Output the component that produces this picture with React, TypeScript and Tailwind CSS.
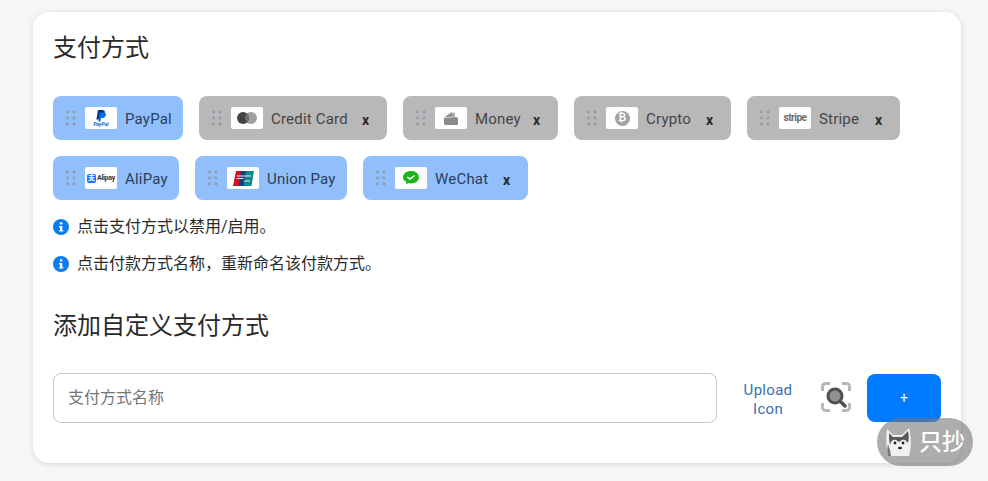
import { ReactNode } from "react";

const font = "font-['Roboto','Noto_Sans_CJK_SC',sans-serif]";

const Grip = () => (
  <svg width="10" height="16" viewBox="0 0 10 16" className="shrink-0 fill-[#8f9aa8]">
    <circle cx="1.5" cy="2" r="1.4" />
    <circle cx="8" cy="2" r="1.4" />
    <circle cx="1.5" cy="8" r="1.4" />
    <circle cx="8" cy="8" r="1.4" />
    <circle cx="1.5" cy="14" r="1.4" />
    <circle cx="8" cy="14" r="1.4" />
  </svg>
);

const PayPalLogo = () => (
  <div className="flex flex-col items-center">
    <svg width="12" height="12" viewBox="0 0 12 12">
      <path d="M3 0h4.200c2 0 3 1.100 2.700 2.800-.4 2.200-1.900 3.200-4 3.200H4.400L3.800 9.500H1.400z" fill="#003087" />
      <path d="M4.600 2.500h4.200c1.500 0 2.400 1 2.100 2.500-.4 2-1.700 3-3.600 3H6L5.500 11.500H3.300z" fill="#0070e0" />
    </svg>
    <span className="text-[5px] leading-[5px] font-bold italic text-[#1f5fb0]">PayPal</span>
  </div>
);

const CardLogo = () => (
  <svg width="22" height="14" viewBox="0 0 22 14">
    <circle cx="15" cy="7" r="6" fill="#a0a0a0" />
    <circle cx="7" cy="7" r="6" fill="#444" />
    <path d="M11 2.500a6 6 0 0 1 0 9a6 6 0 0 1 0-9z" fill="#707070" />
  </svg>
);

const MoneyLogo = () => (
  <svg width="14" height="13" viewBox="0 0 14 13">
    <path d="M0 5.500L8 0l1.500 4.500z" fill="#8f8f8f" />
    <path d="M9 0.500l2 0.500v4H9z" fill="#b0b0b0" />
    <path d="M0 6l12-1a2 2 0 0 1 2 2v4.500a1.500 1.500 0 0 1-1.500 1.500H1.500A1.500 1.500 0 0 1 0 11.500z" fill="#8a8a8a" />
  </svg>
);

const CryptoLogo = () => (
  <div className="flex h-[15px] w-[15px] items-center justify-center rounded-full bg-[#a3a3a3] text-[10px] leading-none font-bold text-white">
    ₿
  </div>
);

const AlipayLogo = () => (
  <div className="flex items-center gap-[1px]">
    <div className="flex h-[9px] w-[9px] items-center justify-center rounded-[2px] bg-[#1677ff] text-[7px] leading-none font-bold text-white">
      支
    </div>
    <span className="text-[7px] leading-none font-bold tracking-[-0.3px] text-[#333]">Alipay</span>
  </div>
);

const UnionLogo = () => (
  <svg width="21" height="15" viewBox="0 0 21 15">
    <path d="M3 0h8L8.500 15H0z" fill="#d6121f" />
    <path d="M8 0h8l-2.500 15h-8z" fill="#143f7f" />
    <path d="M13 0h8l-2.500 15h-8z" fill="#0d8a8e" />
    <path d="M4 5h14M3.500 7.500h7M11 10h6" stroke="#f3e9e9" strokeWidth="1.100" />
  </svg>
);

const WeChatLogo = () => (
  <svg width="16" height="14" viewBox="0 0 16 14">
    <path d="M8 0c4.400 0 8 2.700 8 6.200s-3.600 6.200-8 6.200c-.9 0-1.700-.1-2.500-.3L3 13.500l.4-2.500C1.300 9.900 0 8.200 0 6.200 0 2.700 3.600 0 8 0z" fill="#1db31d" />
    <path d="M4.300 6l2.500 2 5-3.500" fill="none" stroke="#fff" strokeWidth="1.500" />
  </svg>
);

const StripeLogo = () => (
  <span className="text-[10px] leading-none font-bold tracking-[-0.5px] text-[#6b6b6b]">stripe</span>
);

const Chip = ({
  name,
  logo,
  on,
  width,
  close = true,
}: {
  name: string;
  logo: ReactNode;
  on: boolean;
  width: string;
  close?: boolean;
}) => (
  <div
    className={`flex h-11 items-center rounded-lg pl-[13px] ${width} ${on ? "bg-[#90bffb] text-[#2b3f5c]" : "bg-[#b8b8b8] text-[#454545]"}`}
  >
    <Grip />
    <div className="ml-[9px] flex h-[22px] w-8 shrink-0 items-center justify-center rounded-[2px] bg-white">{logo}</div>
    <span className="ml-2 pt-[3px] text-[15px] tracking-[0.2px] whitespace-nowrap">{name}</span>
    {close && <span className="ml-auto pt-[3px] pr-[18px] text-sm font-bold text-[#2a2a2a]">x</span>}
  </div>
);

const Info = ({ text }: { text: string }) => (
  <div className="flex h-4 items-center gap-2">
    <svg width="16" height="16" viewBox="0 0 16 16" className="shrink-0">
      <circle cx="8" cy="8" r="8" fill="#0a7cf0" />
      <rect x="6.800" y="3.200" width="2.600" height="2.400" rx="0.600" fill="#fff" />
      <path d="M6 7h3.300v4.200h1v1.400H6v-1.400h1V8.400H6z" fill="#fff" />
    </svg>
    <span className="text-base leading-none text-[#2a2a2a]">{text}</span>
  </div>
);

const ScanIcon = () => (
  <svg width="30" height="30" viewBox="0 0 30 30" fill="none">
    <path
      d="M1.500 9V4.500a3 3 0 0 1 3-3H9M21 1.500h4.500a3 3 0 0 1 3 3V9M28.500 21v4.500a3 3 0 0 1-3 3H21M9 28.500H4.500a3 3 0 0 1-3-3V21"
      stroke="#b8b8b8"
      strokeWidth="3"
    />
    <circle cx="14" cy="14" r="7" fill="#909090" stroke="#505050" strokeWidth="3" />
    <path d="M19.500 19.500l4.500 4.500" stroke="#505050" strokeWidth="3.500" strokeLinecap="round" />
  </svg>
);

// watermark mascot, small husky head
const Husky = () => (
  <svg width="26" height="28" viewBox="0 0 26 28" className="shrink-0">
    <path d="M2 28C0 18 0 8 1 1l6 6h9l7-7c2 8 3 18 0 28z" fill="#f1f1f1" />
    <path d="M3 5l4 4h9l6-6c1 4 1 8 0 12-2-3-4-4-6-3l-3 2-3-2c-3-1-5 1-6 5-1-4-1-8-1-12z" fill="#5a5a5a" />
    <path d="M2 16c-1 4-1 8 0 12h3l-1-6z" fill="#777" />
    <circle cx="9" cy="15" r="1.400" fill="#222" />
    <circle cx="17" cy="15" r="1.400" fill="#222" />
    <ellipse cx="14" cy="20" rx="2" ry="1.300" fill="#222" />
  </svg>
);

export default function App() {
  return (
    <div className={`relative h-[481px] w-[988px] overflow-hidden bg-[#f6f6f6] pt-3 pl-[33px] ${font}`}>
      <div className="h-[451px] w-[928px] rounded-2xl bg-white px-5 pt-5 shadow-[0_1px_6px_rgba(0,0,0,0.12)]">
        <h2 className="text-2xl leading-8 text-[#2a2a2a]">支付方式</h2>

        <div className="mt-8 flex flex-wrap gap-4">
          <Chip name="PayPal" logo={<PayPalLogo />} on width="w-[130px]" close={false} />
          <Chip name="Credit Card" logo={<CardLogo />} on={false} width="w-[188px]" />
          <Chip name="Money" logo={<MoneyLogo />} on={false} width="w-[155px]" />
          <Chip name="Crypto" logo={<CryptoLogo />} on={false} width="w-[157px]" />
          <Chip name="Stripe" logo={<StripeLogo />} on={false} width="w-[153px]" />
          <Chip name="AliPay" logo={<AlipayLogo />} on width="w-[126px]" close={false} />
          <Chip name="Union Pay" logo={<UnionLogo />} on width="w-[152px]" close={false} />
          <Chip name="WeChat" logo={<WeChatLogo />} on width="w-[165px]" />
        </div>

        <div className="mt-[19px] flex flex-col gap-[21px]">
          <Info text="点击支付方式以禁用/启用。" />
          <Info text="点击付款方式名称，重新命名该付款方式。" />
        </div>

        <h2 className="mt-[38px] text-2xl leading-8 text-[#2a2a2a]">添加自定义支付方式</h2>

        <div className="mt-[31px] flex items-center">
          <div className="flex h-[50px] w-[664px] items-center rounded-lg border border-[#c8c8c8] px-[14px] text-base text-[#767676]">
            支付方式名称
          </div>
          <div className="mt-[3px] ml-[24px] w-[54px] text-center text-[15px] leading-[19px] tracking-[0.3px] text-[#3a70aa]">
            Upload Icon
          </div>
          <div className="mb-[2px] ml-[26px]">
            <ScanIcon />
          </div>
          <button className="ml-4 h-12 w-[74px] rounded-lg bg-[#007bff] text-sm text-white">+</button>
        </div>
      </div>

      <div className="absolute top-[418px] left-[877px] flex h-12 w-24 items-center rounded-full bg-[#767676]/60 pl-[9px] text-[23px] leading-none font-medium text-white">
        <Husky />
        <span className="ml-[7px] whitespace-nowrap">只抄</span>
      </div>
    </div>
  );
}
